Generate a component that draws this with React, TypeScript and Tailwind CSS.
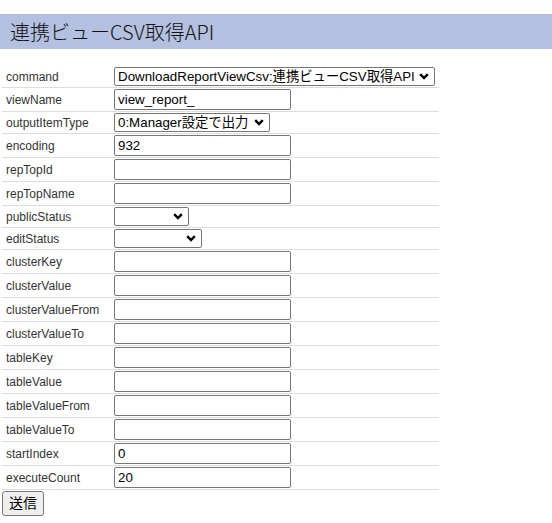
const font = '[font-family:"Liberation_Sans","Noto_Sans_CJK_JP",sans-serif]'

type Field = {
  name: string
  kind: 'input' | 'select'
  value?: string
  width?: string
}

const fields: Field[] = [
  { name: 'command', kind: 'select', value: 'DownloadReportViewCsv:連携ビューCSV取得API', width: 'w-[321px]' },
  { name: 'viewName', kind: 'input', value: 'view_report_' },
  { name: 'outputItemType', kind: 'select', value: '0:Manager設定で出力', width: 'w-[156px]' },
  { name: 'encoding', kind: 'input', value: '932' },
  { name: 'repTopId', kind: 'input' },
  { name: 'repTopName', kind: 'input' },
  { name: 'publicStatus', kind: 'select', value: '', width: 'w-[75px]' },
  { name: 'editStatus', kind: 'select', value: '', width: 'w-[88px]' },
  { name: 'clusterKey', kind: 'input' },
  { name: 'clusterValue', kind: 'input' },
  { name: 'clusterValueFrom', kind: 'input' },
  { name: 'clusterValueTo', kind: 'input' },
  { name: 'tableKey', kind: 'input' },
  { name: 'tableValue', kind: 'input' },
  { name: 'tableValueFrom', kind: 'input' },
  { name: 'tableValueTo', kind: 'input' },
  { name: 'startIndex', kind: 'input', value: '0' },
  { name: 'executeCount', kind: 'input', value: '20' },
]

function Chevron() {
  return (
    <svg width="10" height="7" viewBox="0 0 10 7" className="shrink-0">
      <path d="M1.2 1.2 L5 5 L8.8 1.2" fill="none" stroke="#000" strokeWidth="2.4" />
    </svg>
  )
}

function FakeSelect({ value, width }: { value?: string; width?: string }) {
  return (
    <div
      className={`flex h-[19px] items-center justify-between rounded-[2px] border border-[#767676] bg-white pl-[3px] pr-[5px] text-[13.33px] leading-none text-black ${width}`}
    >
      <span className="whitespace-nowrap">{value}</span>
      <Chevron />
    </div>
  )
}

export default function App() {
  return (
    <div className={`min-h-[523px] bg-white text-black ${font}`}>
      <div className="h-[14px]" />
      <h1 className='flex h-[35px] items-center bg-[#b3c0e0] pl-[10px] text-[20px] font-light text-[#111] [font-family:"Noto_Sans_CJK_JP",sans-serif]'>
        連携ビューCSV取得API
      </h1>
      <div className="h-[17px]" />

      <table className="ml-[2px] w-[437px] border-collapse">
        <tbody>
          {fields.map((f) => (
            <tr key={f.name} className="border-b border-[#dddddd]">
              <td className="w-[111px] p-px pl-[4px] text-[12px] text-[#333]">{f.name}</td>
              <td className="p-px">
                {f.kind === 'select' ? (
                  <FakeSelect value={f.value} width={f.width} />
                ) : (
                  <input
                    type="text"
                    defaultValue={f.value ?? ''}
                    className="block h-[21px] w-[177px] rounded-[2px] border border-[#767676] bg-white px-[3px] text-[13.33px] text-black outline-none"
                  />
                )}
              </td>
            </tr>
          ))}
        </tbody>
      </table>

      <button className="ml-[2px] mt-[1px] flex h-[25px] w-[42px] items-center justify-center rounded-[3px] border border-[#767676] bg-[#efefef] text-[14px] text-black">
        送信
      </button>
    </div>
  )
}
